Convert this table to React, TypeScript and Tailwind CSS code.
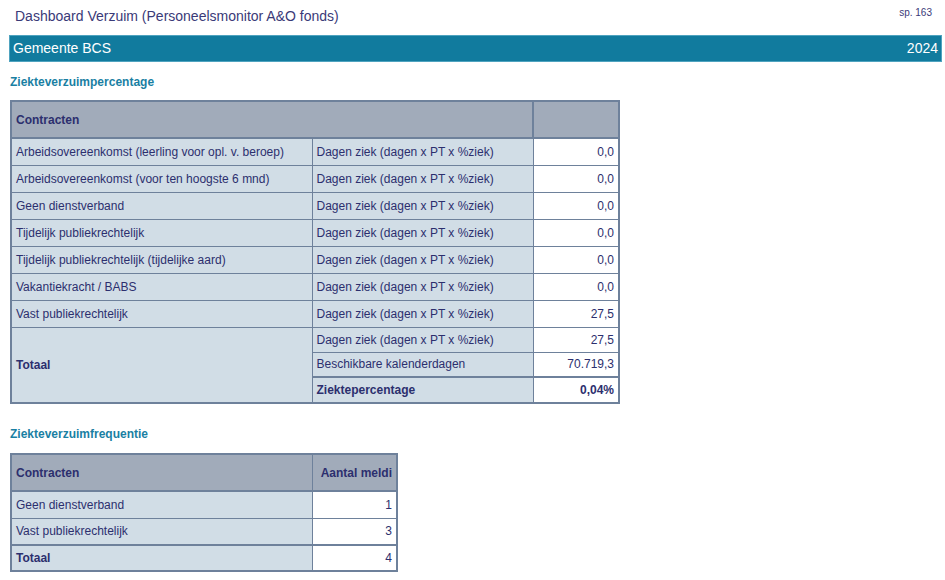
const cellText = 'text-[#2c2f6e]';

const contractRows = [
  'Arbeidsovereenkomst (leerling voor opl. v. beroep)',
  'Arbeidsovereenkomst (voor ten hoogste 6 mnd)',
  'Geen dienstverband',
  'Tijdelijk publiekrechtelijk',
  'Tijdelijk publiekrechtelijk (tijdelijke aard)',
  'Vakantiekracht / BABS',
  'Vast publiekrechtelijk',
];
const contractValues = ['0,0', '0,0', '0,0', '0,0', '0,0', '0,0', '27,5'];

const freqRows = [
  { name: 'Geen dienstverband', value: '1' },
  { name: 'Vast publiekrechtelijk', value: '3' },
];

const td = 'border border-[#6e819b] px-[4px] py-0';

export default function App() {
  return (
    <div
      className="w-[945px] h-[580px] bg-white overflow-hidden text-[12px]"
      style={{ fontFamily: '"Liberation Sans", Arial, sans-serif' }}
    >
      <div className="flex items-start justify-between pl-[15px] pr-[13px] h-[35px]">
        <div className="text-[14px] text-[#3a3a78] pt-[6px]">
          Dashboard Verzuim (Personeelsmonitor A&amp;O fonds)
        </div>
        <div className="text-[10px] text-[#3a3a78] pt-[5px]">sp. 163</div>
      </div>

      <div className="ml-[9px] mr-[3px] h-[27px] bg-[#117b9e] border border-[#4fa3bf] flex items-center justify-between px-[3px] text-white text-[14px]">
        <span>Gemeente BCS</span>
        <span>2024</span>
      </div>

      <div className="pl-[10px] pt-[11px] h-[38px] text-[12px] font-bold text-[#1a7fa3]">
        Ziekteverzuimpercentage
      </div>

      <div className="pl-[10px]">
        <table className={`border-collapse border-2 border-[#6e819b] ${cellText}`}>
          <colgroup>
            <col className="w-[301px]" />
            <col className="w-[221px]" />
            <col className="w-[86px]" />
          </colgroup>
          <tbody>
            <tr className="h-[37px] bg-[#a1abba]">
              <td colSpan={2} className={`${td} font-bold border-b-2`}>Contracten</td>
              <td className={`${td} border-b-2 border-l-2`}></td>
            </tr>
            {contractRows.map((name, i) => (
              <tr key={name} className="h-[27px]">
                <td className={`${td} bg-[#d1dde6]`}>{name}</td>
                <td className={`${td} bg-[#d1dde6]`}>Dagen ziek (dagen x PT x %ziek)</td>
                <td className={`${td} bg-white text-right`}>{contractValues[i]}</td>
              </tr>
            ))}
            <tr className="h-[25px]">
              <td rowSpan={3} className={`${td} bg-[#d1dde6] font-bold`}>Totaal</td>
              <td className={`${td} bg-[#d1dde6]`}>Dagen ziek (dagen x PT x %ziek)</td>
              <td className={`${td} bg-white text-right`}>27,5</td>
            </tr>
            <tr className="h-[25px]">
              <td className={`${td} bg-[#d1dde6]`}>Beschikbare kalenderdagen</td>
              <td className={`${td} bg-white text-right`}>70.719,3</td>
            </tr>
            <tr className="h-[26px]">
              <td className={`${td} bg-[#d1dde6] font-bold border-t-2`}>Ziektepercentage</td>
              <td className={`${td} bg-white text-right font-bold border-t-2`}>0,04%</td>
            </tr>
          </tbody>
        </table>
      </div>

      <div className="pl-[10px] pt-[21px] h-[49px] text-[12px] font-bold text-[#1a7fa3]">
        Ziekteverzuimfrequentie
      </div>

      <div className="pl-[10px]">
        <table className={`border-collapse border-2 border-[#6e819b] ${cellText}`}>
          <colgroup>
            <col className="w-[301px]" />
            <col className="w-[85px]" />
          </colgroup>
          <tbody>
            <tr className="h-[37px] bg-[#a1abba] font-bold">
              <td className={`${td} border-b-2`}>Contracten</td>
              <td className={`${td} border-b-2 text-right`}>Aantal meldi</td>
            </tr>
            {freqRows.map((r) => (
              <tr key={r.name} className="h-[27px]">
                <td className={`${td} bg-[#d1dde6]`}>{r.name}</td>
                <td className={`${td} bg-white text-right`}>{r.value}</td>
              </tr>
            ))}
            <tr className="h-[26px]">
              <td className={`${td} bg-[#d1dde6] font-bold border-t-2`}>Totaal</td>
              <td className={`${td} bg-white text-right border-t-2`}>4</td>
            </tr>
          </tbody>
        </table>
      </div>
    </div>
  );
}
